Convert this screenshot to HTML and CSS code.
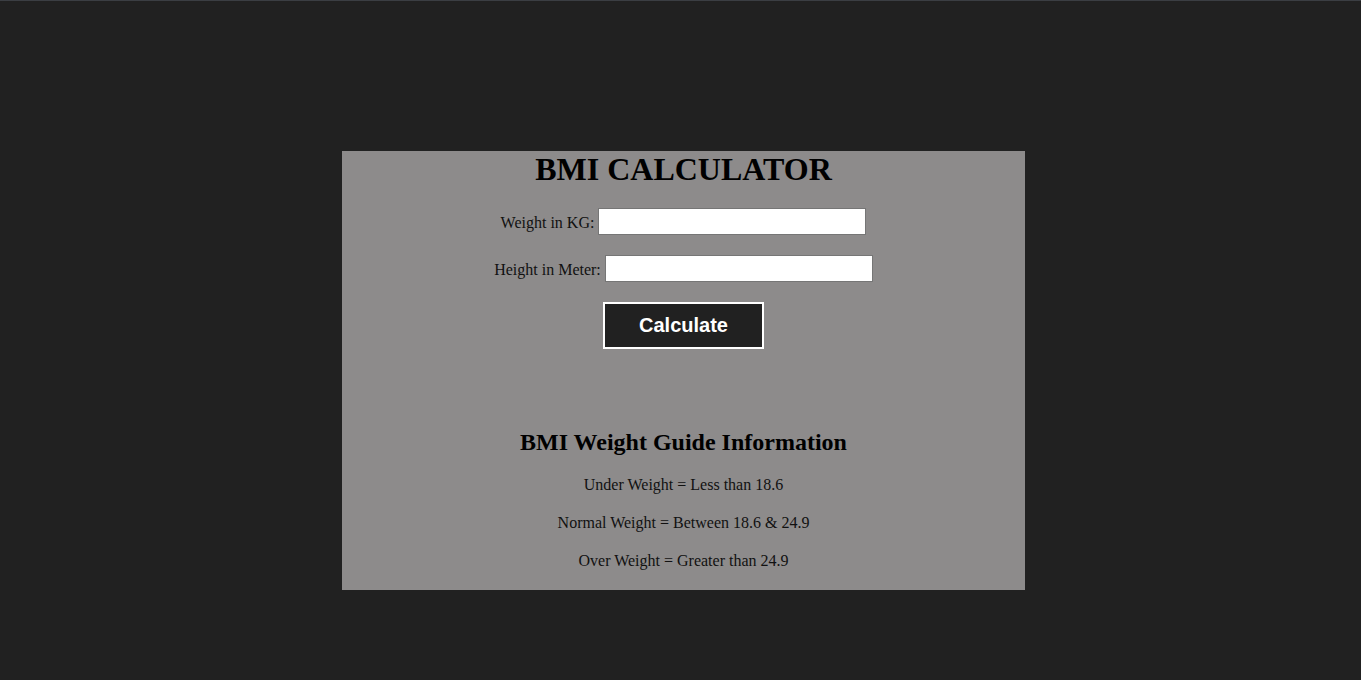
FILE: index.html
```html
<!DOCTYPE html>
<html>
<head>
<meta charset="utf-8">
<link rel="stylesheet" href="styles.css">
</head>
<body>
<div class="calc">
  <h1 class="title">BMI CALCULATOR</h1>
  <div class="row"><label class="lbl">Weight in KG:</label><input class="field" type="text"></div>
  <div class="row"><label class="lbl">Height in Meter:</label><input class="field" type="text"></div>
  <button class="btn">Calculate</button>
  <h2 class="guide-title">BMI Weight Guide Information</h2>
  <p class="guide">Under Weight = Less than 18.6</p>
  <p class="guide">Normal Weight = Between 18.6 &amp; 24.9</p>
  <p class="guide">Over Weight = Greater than 24.9</p>
</div>
</body>
</html>
```
FILE: styles.css
```css
html, body {
  margin: 0;
  padding: 0;
}
body {
  background: #212121;
  border-top: 1px solid #3b3e43;
  min-height: 679px;
  font-family: "Liberation Serif", "Times New Roman", serif;
  color: #000;
}
.calc {
  width: 683px;
  margin: 150px 0 0 342px;
  background: #8d8b8b;
  display: flex;
  flex-direction: column;
  align-items: center;
  padding-bottom: 20px;
}
.title {
  margin: 0;
  font-size: 32px;
  line-height: 37px;
  font-weight: bold;
}
.row {
  display: flex;
  align-items: center;
  gap: 4px;
  margin-top: 20px;
  font-size: 16px;
  color: #111;
}
.lbl {
  padding-top: 2px;
}
.field {
  width: 268px;
  height: 27px;
  box-sizing: border-box;
  border: 1px solid #767676;
  background: #fff;
  margin: 0;
  padding: 2px 4px;
}
.btn {
  margin-top: 20px;
  width: 161px;
  height: 47px;
  box-sizing: border-box;
  background: #212121;
  border: 2px solid #fff;
  color: #fff;
  font-family: "Liberation Sans", Arial, sans-serif;
  font-weight: bold;
  font-size: 20px;
  cursor: pointer;
}
.guide-title {
  margin: 79px 0 0;
  font-size: 24px;
  line-height: 28px;
  font-weight: bold;
}
.guide {
  margin: 20px 0 0;
  font-size: 16px;
  line-height: 18px;
  color: #111;
}
.guide:last-child {
  margin-bottom: 0;
}
```
